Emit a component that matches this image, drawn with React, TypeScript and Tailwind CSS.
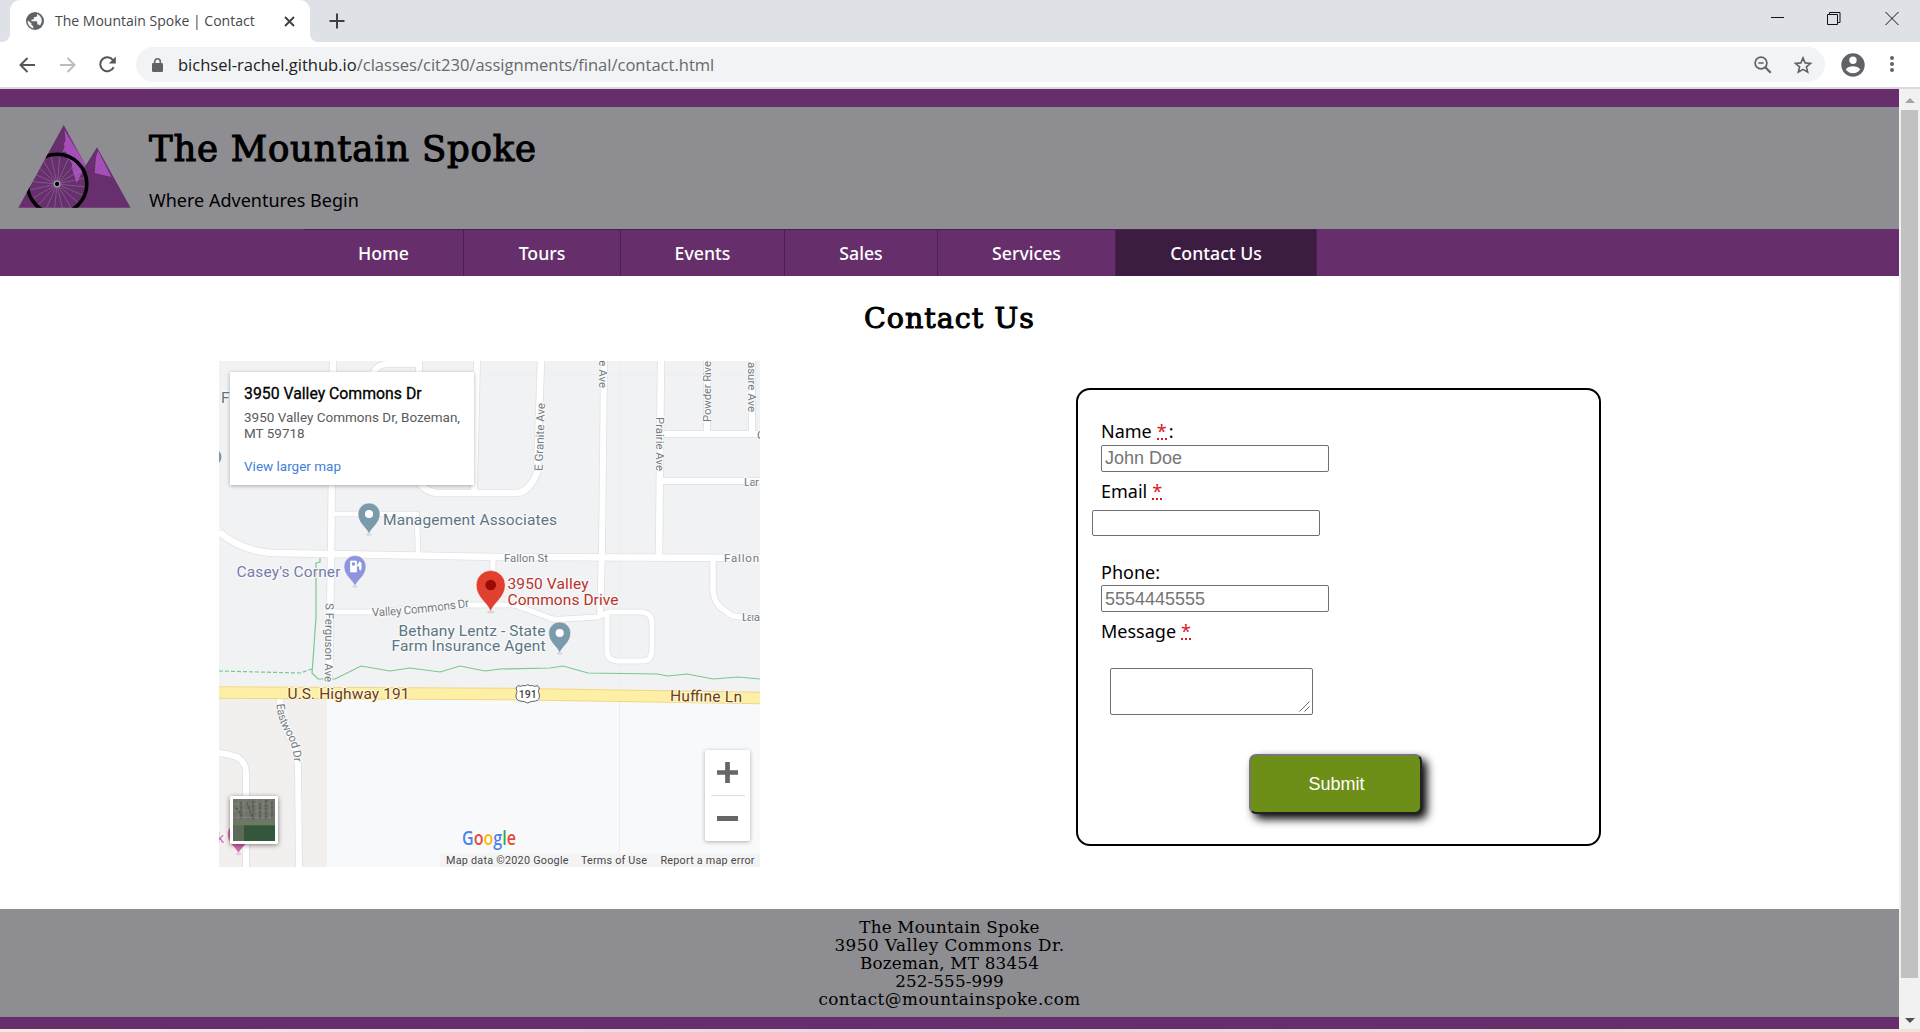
import React from "react";

const NAV = [
  { label: "Home", width: "w-[160px]" },
  { label: "Tours", width: "w-[157px]" },
  { label: "Events", width: "w-[164px]" },
  { label: "Sales", width: "w-[153px]" },
  { label: "Services", width: "w-[178px]" },
  { label: "Contact Us", width: "w-[201px]", active: true },
];

function TabStrip() {
  return (
    <div className="flex h-[42px] shrink-0 bg-[#dee1e6]">
      <div className="flex w-[10px] flex-col justify-end bg-white">
        <div className="h-full rounded-br-[8px] bg-[#dee1e6]" />
      </div>
      <div className="flex w-[300px] items-center rounded-t-[10px] bg-white pl-4">
        <svg className="h-[18px] w-[18px]" viewBox="0 0 20 20">
          <circle cx="10" cy="10" r="10" fill="#5f6368" />
          <path d="M2.200 9.500 6 12.500v1.800l2 1.400v2.400C4.500 17.300 1.900 14 1.900 10.600zM12.300 2.300v1.500q0 1.500-1.600 1.700H8.800v2q0 .9-1 .9H6v2h5.500q1 0 1 1v2.600h1.200q1.300 0 1.700 1.300c3.200-3.700 3.400-10.300-3.100-13z" fill="#f5f6f7" />
        </svg>
        <span className="ml-[11px] w-[202px] whitespace-nowrap text-[14px] leading-5 text-[#45484c]">The Mountain Spoke | Contact</span>
        <svg className="ml-[27px] h-[11px] w-[11px]" viewBox="0 0 11 11" stroke="#3c4043" strokeWidth="1.900">
          <path d="M1 1l9 9M10 1l-9 9" />
        </svg>
      </div>
      <div className="flex w-[10px] flex-col bg-white">
        <div className="h-full rounded-bl-[8px] bg-[#dee1e6]" />
      </div>
      <svg className="ml-[9px] mt-[13px] h-4 w-4" viewBox="0 0 16 16" stroke="#3c4043" strokeWidth="2">
        <path d="M8 .5v15M.5 8h15" />
      </svg>
      <div className="ml-auto flex items-start pt-[11px]">
        <svg className="mr-[42px] h-[15px] w-[14px]" viewBox="0 0 14 15" stroke="#111">
          <path d="M0 6.500h13" />
        </svg>
        <svg className="mr-[44px] h-[15px] w-[14px]" viewBox="0 0 14 15" fill="none" stroke="#111">
          <path d="M.5 3.500h10v10H.5zM2.500 3.500v-2h10.500v10h-2" />
        </svg>
        <svg className="mr-[21px] h-[15px] w-[14px]" viewBox="0 0 14 15" stroke="#111">
          <path d="M.5 1l13 13M13.500 1l-13 13" />
        </svg>
      </div>
    </div>
  );
}

function Toolbar() {
  return (
    <div className="flex h-[47px] shrink-0 items-start border-b-2 border-[#ddd8e0] bg-white pt-[5px]">
      <div className="flex h-[35px] w-[136px] items-center">
        <svg className="ml-[19px] h-4 w-4" viewBox="0 0 16 16" fill="none" stroke="#54575b" strokeWidth="2">
          <path d="M16 8H1.500M8.500 1 1.500 8l7 7" />
        </svg>
        <svg className="ml-[25px] h-4 w-4" viewBox="0 0 16 16" fill="none" stroke="#bbbcbe" strokeWidth="2">
          <path d="M0 8h14.500M7.500 1l7 7-7 7" />
        </svg>
        <svg className="ml-[23px] h-[17px] w-[17px]" viewBox="0 0 17 17" fill="none" stroke="#54575b" strokeWidth="2">
          <path d="M14.600 11.300A7 7 0 1 1 14 4.200" />
          <path d="M16.800.5v7h-7z" fill="#54575b" stroke="none" />
        </svg>
      </div>
      <div className="flex h-[35px] w-[1689px] items-center rounded-full bg-[#f1f3f4] pl-4">
        <svg className="h-[14px] w-[11px]" viewBox="0 0 11 14">
          <rect y="5" width="11" height="9" rx="1.200" fill="#5f6368" />
          <path d="M2.700 6V3.600a2.800 2.800 0 0 1 5.600 0V6" fill="none" stroke="#5f6368" strokeWidth="1.500" />
        </svg>
        <span className="ml-[15px] whitespace-nowrap text-[16.550px] leading-6 text-[#66696d]">
          <span className="text-[#202124]">bichsel-rachel.github.io</span>/classes/cit230/assignments/final/contact.html
        </span>
        <svg className="ml-auto mr-[22px] h-[18px] w-[18px]" viewBox="0 0 18 18" fill="none" stroke="#5f6368">
          <circle cx="7" cy="7" r="5.900" strokeWidth="1.700" />
          <path d="M4.300 7h5.400" strokeWidth="1.500" />
          <path d="m11.300 11.300 5.400 5.400" strokeWidth="2.200" />
        </svg>
        <svg className="mr-[13px] h-[18px] w-[18px]" viewBox="0 0 18 18" fill="none" stroke="#5f6368" strokeWidth="1.600">
          <path d="m9 1.900 2.100 5 5.400.5-4.100 3.500 1.300 5.300L9 13.400l-4.700 2.800 1.300-5.300-4.100-3.500 5.400-.5z" />
        </svg>
      </div>
      <svg className="ml-4 mt-[6px] h-6 w-6" viewBox="0 0 24 24">
        <circle cx="12" cy="12" r="11.700" fill="#5f6368" />
        <circle cx="12" cy="7.300" r="3.700" fill="#fff" />
        <path d="M4.800 16.600C6.200 14.200 9 13.200 12 13.200s5.800 1 7.200 3.400C17.700 19 15 20.300 12 20.300s-5.700-1.300-7.200-3.700z" fill="#fff" />
      </svg>
      <div className="ml-[25px] mt-[9px] flex flex-col gap-[2px]">
        <i className="h-1 w-1 rounded-full bg-[#5f6368]" />
        <i className="h-1 w-1 rounded-full bg-[#5f6368]" />
        <i className="h-1 w-1 rounded-full bg-[#5f6368]" />
      </div>
    </div>
  );
}

function Logo() {
  const spokes = Array.from({ length: 20 }, (_, i) => (i * Math.PI) / 10 + 0.1);
  return (
    <svg className="h-[83px] w-[113px]" viewBox="0 0 113 83">
      <clipPath id="peaks">
        <path d="M.4 82.700 45.700 0l22 40.500L79 22.300l33.600 60.400z" />
      </clipPath>
      <g clipPath="url(#peaks)">
        <rect width="113" height="83" fill="#672f6e" />
        <path d="M46.500 5 67.700 40l-9 18-4-12-1-8-4-5.500-1.500-6-4 .5 2.500-5-1-3 1.800-3z" fill="#a44fb8" />
        <path d="M80 25.500 93.400 52 76.700 48 78 32z" fill="#a44fb8" />
        {spokes.map((a) => (
          <line key={a} x1="39.100" y1="59" x2={39.1 + 28 * Math.cos(a)} y2={59 + 28 * Math.sin(a)} stroke="#957a9d" strokeWidth="0.550" />
        ))}
        <circle cx="39.100" cy="59" r="29.700" fill="none" stroke="#000" strokeWidth="3.600" />
        <circle cx="39.100" cy="59" r="2.800" fill="#000" stroke="#a79bab" strokeWidth="1.300" />
      </g>
    </svg>
  );
}

const ROADS = [
  { d: "M114 0 112 200 110 322", w: 6.5 },
  { d: "M154 12Q159 3 168 3H202", w: 6 },
  { d: "M200 0V12", w: 6 },
  { d: "M258 0 255 132", w: 6 },
  { d: "M199 118Q203 130 218 132H298Q310 131 318 112L322 0", w: 6.5 },
  { d: "M385 0 383 189 381 256", w: 6 },
  { d: "M442 0 440 196", w: 6.5 },
  { d: "M442 73H541", w: 6 },
  { d: "M488 0V73", w: 6 },
  { d: "M533 0V73", w: 6 },
  { d: "M440 120H541", w: 6 },
  { d: "M0 171Q22 190 54 192L281 196 541 197", w: 6.5 },
  { d: "M114 153H198L199 193", w: 4.5 },
  { d: "M274 196V243", w: 5 },
  { d: "M113 251H151L251 244H288Q297 243 304 247L331 257Q335 259 345 258L379 256 390 251H422Q433 252 433 262V290Q432 300 424 300H398Q388 299 388 290V254", w: 5 },
  { d: "M494 196V229Q495 240 501 246L512 254Q516 257 541 256", w: 5.5 },
  { d: "M61 337V350Q63 362 70 375 78 388 79 405L80 506", w: 6 },
  { d: "M0 392Q10 393 18 396 27 401 27 412V506", w: 6 },
];

function Pin({ x, y, r, tip, fill, dot }: { x: number; y: number; r: number; tip: number; fill: string; dot?: string }) {
  return (
    <g>
      <ellipse cx={x} cy={tip} rx={r * 0.25} ry="1.200" fill="#000" opacity="0.120" />
      <path
        d={`M${x} ${tip}C${x - r * 0.18} ${y + r * 1.2} ${x - r} ${y + r * 0.9} ${x - r} ${y}A${r} ${r} 0 0 1 ${x + r} ${y}C${x + r} ${y + r * 0.9} ${x + r * 0.18} ${y + r * 1.2} ${x} ${tip}Z`}
        fill={fill}
        stroke="#fff"
        strokeWidth="0.500"
      />
      {dot && <circle cx={x} cy={y} r={r * 0.37} fill={dot} />}
    </g>
  );
}

function MapDrawing() {
  const halo = { paintOrder: "stroke", stroke: "#f8f9fa", strokeWidth: 2.4, strokeLinejoin: "round" } as const;
  return (
    <svg className="block h-[506px] w-[541px] font-[Roboto,sans-serif]" viewBox="0 0 541 506">
      <rect width="541" height="506" fill="#f1f2f4" />
      <rect y="336" width="541" height="170" fill="#f8f9fb" />
      <rect y="336" width="108" height="170" fill="#f1f0ef" />
      <path d="M400.500 0V506M0 13.500H541" stroke="#eceef0" fill="none" />
      {ROADS.map((r) => (
        <path key={r.d} d={r.d} fill="none" stroke="#dfe1e4" strokeWidth={r.w + 1.6} />
      ))}
      {ROADS.map((r) => (
        <path key={r.d} d={r.d} fill="none" stroke="#fff" strokeWidth={r.w} />
      ))}
      <path d="M0 331.500 290 333 541 337" fill="none" stroke="#f3d584" strokeWidth="12.500" />
      <path d="M0 331.500 290 333 541 337" fill="none" stroke="#fdf0a6" strokeWidth="10.500" />
      <path d="M0 310 40 311 81 312 93 308" fill="none" stroke="#7cc792" strokeWidth="1.200" strokeDasharray="4 2" />
      <path d="M101 197V201L97 202V256L94 299 93 312 99 318H116L142 305 171 310 191 307 221 311 241 305 266 310 281 308 331 307 344 305 369 312 438 313 449 315 468 313 494 318 519 316 541 318" fill="none" stroke="#7cc792" strokeWidth="1.200" />

      <g fill="#74797f" fontSize="11.500" {...halo}>
        <text x="285" y="200.500" textLength="44">Fallon St</text>
        <text x="505" y="201" textLength="35">Fallon</text>
        <text x="525" y="125" textLength="15">Lar</text>
        <text x="538" y="78">C</text>
        <text x="523" y="260" textLength="18">Lara</text>
        <text transform="translate(323.500 110) rotate(-88)" textLength="68">E Granite Ave</text>
        <text transform="translate(380 27) rotate(90)" textAnchor="end">e Ave</text>
        <text transform="translate(436.600 56) rotate(90)" textLength="54">Prairie Ave</text>
        <text transform="translate(491.500 61) rotate(-90)" textLength="61">Powder Rive</text>
        <text transform="translate(528.500 51) rotate(90)" textAnchor="end">asure Ave</text>
        <text transform="translate(106.500 242) rotate(90.600)" textLength="79">S Ferguson Ave</text>
        <path id="valley" d="M153 255.500Q205 253 252 245.500" fill="none" stroke="none" />
        <text fontSize="11.800"><textPath href="#valley" textLength="98">Valley Commons Dr</textPath></text>
        <path id="eastwood" d="M57.500 343Q58 357 66 371 75 385 75 404" fill="none" stroke="none" />
        <text><textPath href="#eastwood" textLength="61">Eastwood Dr</textPath></text>
      </g>

      <g fill="#5d7582" fontSize="15.500" {...halo}>
        <text x="2" y="42">F</text>
        <text x="164" y="164" textLength="174">Management Associates</text>
        <text x="179.500" y="275" textLength="147">Bethany Lentz - State</text>
        <text x="172.500" y="290" textLength="154">Farm Insurance Agent</text>
        <text x="17.500" y="216" textLength="104" fill="#757bab">Casey&apos;s Corner</text>
        <text x="-2" y="481.500" fontSize="14" fill="#cf62ad">k</text>
        <text x="288.500" y="228" textLength="81" fill="#b8322a">3950 Valley</text>
        <text x="288.500" y="243.500" textLength="111" fill="#b8322a">Commons Drive</text>
      </g>
      <g fill="#6b3f17" fontSize="15.500" paintOrder="stroke" stroke="#fff8df" strokeWidth="2">
        <text x="68.500" y="337.500" textLength="122">U.S. Highway 191</text>
        <text transform="translate(451 340) rotate(1)" textLength="72">Huffine Ln</text>
      </g>
      <path d="M299 324.500q3 1.800 5 0 2 1 4.700-.8 2.700 1.800 4.700.8 2 1.800 5 0l2 2.500q-2 3 0 7 .5 5-4 6-5 .3-7.700 2-2.700-1.700-7.700-2-4.500-1-4-6 2-4 0-7z" fill="#fff" stroke="#60646a" />
      <text x="308.700" y="336.500" textAnchor="middle" fontSize="10.500" fontWeight="500" fill="#3e4246">191</text>

      <circle cx="-6" cy="96" r="8.500" fill="#7b9aac" />
      <Pin x={150} y={153} r={11} tip={173.5} fill="#7b9aac" dot="#fff" />
      <Pin x={340.7} y={272} r={11} tip={292.5} fill="#7b9aac" dot="#fff" />
      <Pin x={136} y={205.5} r={11} tip={225.5} fill="#8d96dc" />
      <path d="M131.500 200h6v11h-6zm6 5h2q1 0 1 1.500v2q.8 1 1.600 0V202l-1.600-1.500" fill="#fff" stroke="#fff" strokeWidth=".7" />
      <rect x="133" y="201.500" width="3" height="3" fill="#8d96dc" />
      <Pin x={19.5} y={473} r={11} tip={493} fill="#d865ad" />
      <Pin x={271.7} y={224} r={14.5} tip={251} fill="#e1402f" dot="#9b0a06" />

      <text x="243" y="484" fontSize="19" fontWeight="600" textLength="54" lengthAdjust="spacingAndGlyphs" fontFamily="Open Sans" stroke="#fff" strokeWidth="1.500" paintOrder="stroke">
        <tspan fill="#4b83ee">G</tspan>
        <tspan fill="#e5493d">o</tspan>
        <tspan fill="#f6b90d">o</tspan>
        <tspan fill="#4b83ee">g</tspan>
        <tspan fill="#36a656">l</tspan>
        <tspan fill="#e5493d">e</tspan>
      </text>
      <rect x="221" y="492" width="320" height="14" fill="#f4f4f5" />
      <g fontSize="10.800" fill="#484848">
        <text x="227" y="503" textLength="122.500">Map data ©2020 Google</text>
        <text x="362" y="503" textLength="66">Terms of Use</text>
        <text x="441.500" y="503" textLength="94">Report a map error</text>
      </g>
    </svg>
  );
}

function SatelliteThumb() {
  return (
    <svg className="h-full w-full" viewBox="0 0 42 43" preserveAspectRatio="none">
      <rect width="42" height="43" fill="#6f7369" />
      <path d="M0 5h42M0 12h42M0 19h42M5 0v24M11 0v22M24 0v22M30 0v22M37 0v22" stroke="#8d8e83" strokeWidth=".8" opacity=".7" />
      <path d="M8 3v17M20 2v20M27 4v16M33 1v20M14 4l5 14M3 9l6 8M39 3v17" stroke="#555a53" strokeWidth="1.500" strokeDasharray="3 1" />
      <rect y="23" width="42" height="4" fill="#6c7b60" />
      <rect x="11" y="27" width="31" height="16" fill="#34563a" />
      <rect y="27" width="11" height="16" fill="#5d6a5a" />
    </svg>
  );
}

function MapEmbed() {
  return (
    <div className="relative h-[506px] w-[541px] overflow-hidden">
      <MapDrawing />
      <div className="absolute left-[11px] top-[11px] h-[113px] w-[244px] bg-white pl-[14px] pt-3 font-[Roboto,sans-serif] shadow-[0_1px_4px_rgba(0,0,0,0.3)]">
        <div className="text-[15.800px] leading-5 text-black [-webkit-text-stroke:0.300px_#000]">3950 Valley Commons Dr</div>
        <div className="mt-[5px] w-[222px] text-[13.500px] leading-4 text-[#5b5b5b]">3950 Valley Commons Dr, Bozeman, MT 59718</div>
        <div className="mt-[17px] text-[13.500px] leading-4 text-[#437fd8]">View larger map</div>
      </div>
      <div className="absolute left-[11px] top-[435px] h-12 w-12 rounded-[2px] border-[3px] border-white shadow-[0_1px_5px_rgba(0,0,0,0.5)]">
        <SatelliteThumb />
      </div>
      <div className="absolute left-[486px] top-[389px] flex h-[91px] w-[45px] flex-col items-center rounded-[2px] bg-white shadow-[0_1px_4px_rgba(0,0,0,0.3)]">
        <svg className="mt-3 h-[21px] w-[21px]" viewBox="0 0 21 21" stroke="#666" strokeWidth="4.700">
          <path d="M10.500 0v21M0 10.500h21" />
        </svg>
        <div className="mt-3 h-px w-[34px] bg-[#dedede]" />
        <div className="mt-5 h-[5px] w-[21px] bg-[#666]" />
      </div>
    </div>
  );
}

function Label({ text, required, after }: { text: string; required?: boolean; after?: string }) {
  return (
    <div className="flex h-6 leading-6">
      {text}
      {required && (
        <span className="relative ml-[5px] w-[10px] text-[#d8191f]">
          *
          <i className="absolute bottom-[3px] left-0 right-0 border-b-2 border-dotted border-[#d8191f]" />
        </span>
      )}
      {after && <span className="ml-[2px]">{after}</span>}
    </div>
  );
}

function ContactForm() {
  const input = "box-border block w-[228px] rounded-[2px] border border-[#6f6f74] bg-white px-[3px] font-['Liberation_Sans',sans-serif] text-[18px] leading-5 placeholder:text-[#757575]";
  return (
    <form className="ml-[316px] mt-[27px] h-[458px] w-[525px] rounded-[14px] border-2 border-black pl-[23px] pt-[29px] text-[18px]">
      <Label text="Name" required after=":" />
      <input className={`${input} mt-[2px] h-[27px]`} placeholder="John Doe" />
      <div className="mt-[7px]"><Label text="Email" required /></div>
      <input className={`${input} -ml-[9px] mt-[7px] h-[26px]`} />
      <div className="mt-6"><Label text="Phone:" /></div>
      <input className={`${input} mt-px h-[27px] pt-[2px]`} placeholder="5554445555" />
      <div className="mt-[7px]"><Label text="Message" required /></div>
      <div className="relative ml-[9px] mt-[25px] h-[47px] w-[203px]">
        <textarea className="block h-full w-full resize-none rounded-[2px] border border-[#6f6f74] bg-white" />
        <svg className="absolute bottom-[3px] right-[3px] h-[11px] w-[11px]" viewBox="0 0 11 11" stroke="#6a6a6a">
          <path d="M.5 10.500l10-10M5.500 10.500l5-5" />
        </svg>
      </div>
      <button type="button" className="ml-[148px] mt-[39px] block h-[60px] w-[173px] rounded-[7px] border-2 border-b-[#222] border-l-[#767676] border-r-[#222] border-t-[#767676] bg-[#6e8f17] pl-[2px] font-['Liberation_Sans',sans-serif] text-[18px] text-white shadow-[5px_5px_10px_#000]">
        Submit
      </button>
    </form>
  );
}

export default function App() {
  return (
    <div className="flex h-[1032px] w-[1920px] flex-col overflow-hidden bg-white font-['Open_Sans',sans-serif]">
      <TabStrip />
      <Toolbar />
      <div className="flex h-[940px] shrink-0">
        <div className="flex w-[1899px] flex-col font-['Noto_Sans',sans-serif] text-black">
          <header className="flex h-[140px] border-t-[18px] border-[#662f6c] bg-[#8e8d92] pl-[18px]">
            <div className="pt-[18px]"><Logo /></div>
            <div className="ml-[18px] pt-[18px]">
              <h1 className="whitespace-nowrap font-['DejaVu_Serif',serif] text-[35.500px] leading-[48px] tracking-[0.750px] [-webkit-text-stroke:1.100px_#000]">The Mountain Spoke</h1>
              <p className="mt-[15px] text-[18px] leading-6">Where Adventures Begin</p>
            </div>
          </header>
          <nav className="flex h-[47px] bg-[#662f6c] pl-[304px]">
            {NAV.map((n) => (
              <a
                key={n.label}
                className={`${n.width} flex items-center justify-center border-r border-t border-[#4a2150] text-[17.700px] font-medium leading-6 text-white ${n.active ? "bg-[#3d1c41]" : ""}`}
              >
                {n.label}
              </a>
            ))}
          </nav>
          <main className="flex h-[633px] flex-col pt-[26px]">
            <h2 className="text-center font-['DejaVu_Serif',serif] text-[28.500px] leading-[34px] tracking-[1px] [-webkit-text-stroke:1px_#000]">Contact Us</h2>
            <div className="mt-[25px] flex items-start pl-[219px]">
              <MapEmbed />
              <ContactForm />
            </div>
          </main>
          <footer className="h-[120px] border-b-[12px] border-[#662f6c] bg-[#8e8d92] pt-[9px] text-center font-['DejaVu_Serif',serif] text-[16.800px] leading-[18px]">
            <p className="tracking-[0.200px]">The Mountain Spoke</p>
            <p className="tracking-[0.500px]">3950 Valley Commons Dr.</p>
            <p className="tracking-[0.200px]">Bozeman, MT 83454</p>
            <p className="tracking-[0.100px]">252-555-999</p>
            <p className="tracking-[0.450px]">contact@mountainspoke.com</p>
          </footer>
        </div>
        <div className="flex w-[21px] flex-col items-center bg-[#f1f1f1]">
          <div className="mt-[9px] border-x-[5px] border-b-[5px] border-x-transparent border-b-[#a3a3a3]" />
          <div className="mt-[7px] h-[868px] w-[17px] bg-[#c1c1c1]" />
          <div className="mt-10 border-x-[5px] border-t-[5px] border-x-transparent border-t-[#505050]" />
        </div>
      </div>
      <div className="h-[3px] shrink-0 bg-linear-to-r from-[#f6e9e4] via-[#e4d6e6] to-[#efe4d2]" />
    </div>
  );
}
